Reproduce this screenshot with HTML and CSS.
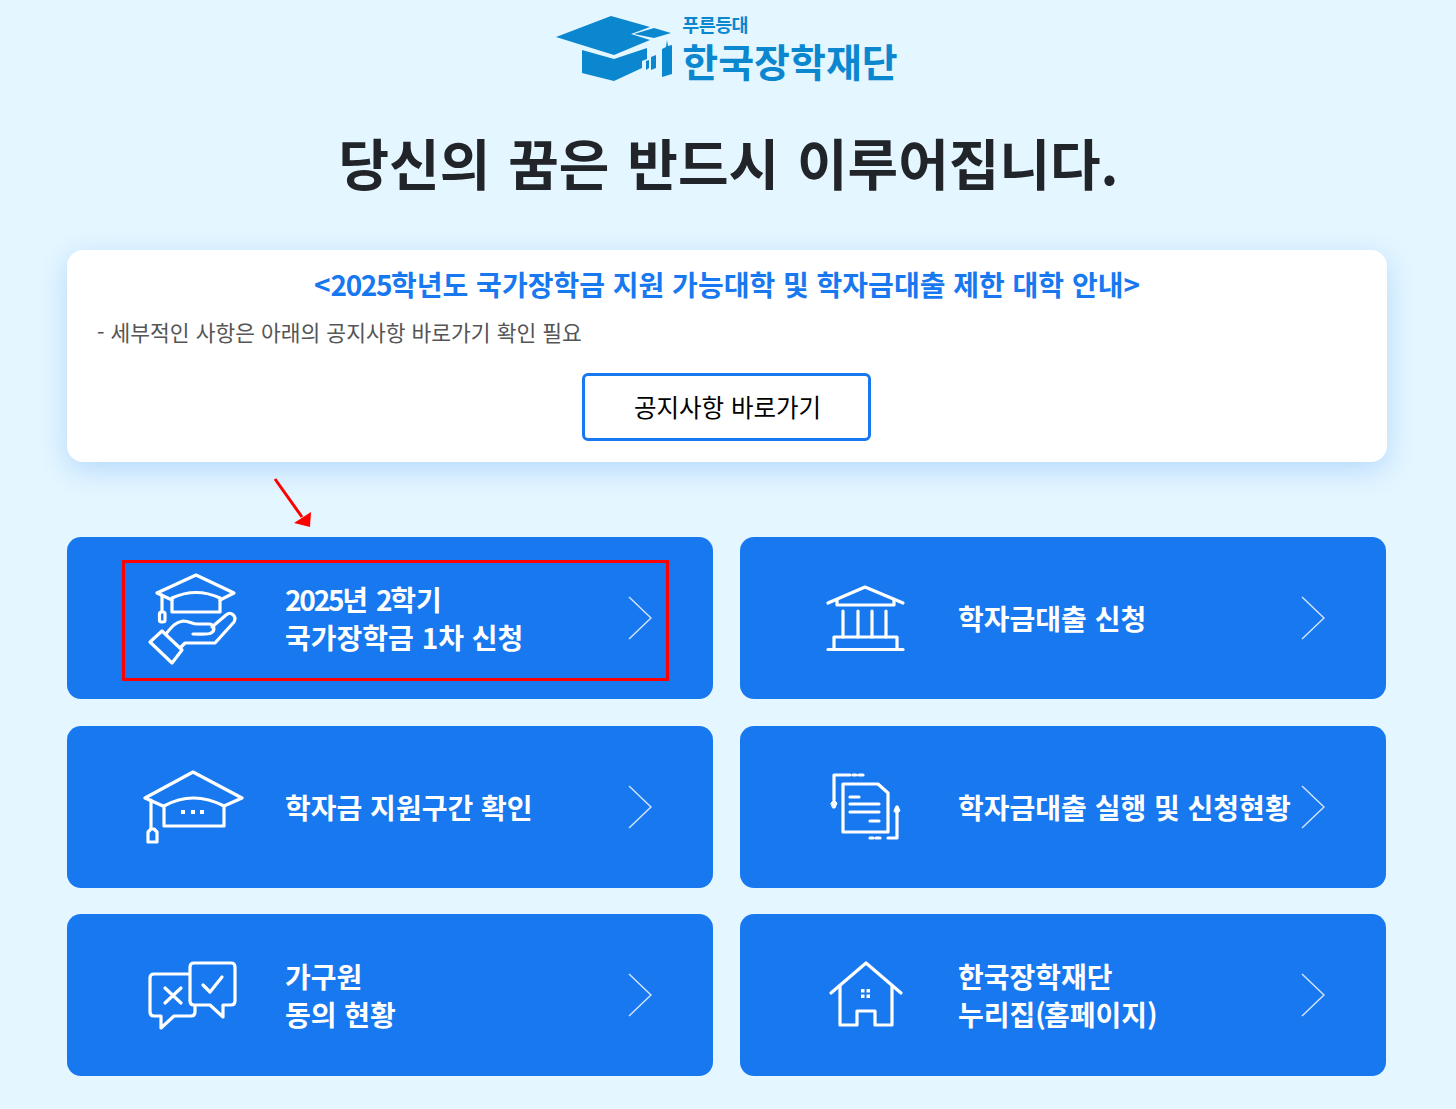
FILE: index.html
```html
<!DOCTYPE html>
<html lang="ko">
<head>
<meta charset="utf-8">
<title>한국장학재단</title>
<link rel="stylesheet" href="styles.css">
</head>
<body>
<div class="page">
  <header class="logo">
    <svg class="logo-mark" viewBox="555 12 122 72" width="122" height="72" aria-hidden="true">
      <path d="M557 37 612 16 651 27 632 34 651 40 615 55Z"/>
      <path d="M635 34 655 28 672 33 655 38Z"/>
      <path d="M583 50 615 59 648 48V59L643 61V68L615 81 583 73Z"/>
      <path d="M647 61 650 60V68L647 70Z"/>
      <path d="M652 57 657 55V68L652 70Z"/>
      <path d="M663 49 667 47 668 40 669 46 673 45V74L663 77Z"/>
    </svg>
    <div class="logo-text">
      <span class="logo-sub">푸른등대</span>
      <span class="logo-name">한국장학재단</span>
    </div>
  </header>

  <h1 class="title">당신의 꿈은 반드시 이루어집니다.</h1>

  <section class="notice">
    <h2 class="notice-title">&lt;<span class="num">2025</span>학년도 국가장학금 지원 가능대학 및 학자금대출 제한 대학 안내&gt;</h2>
    <p class="notice-text">- 세부적인 사항은 아래의 공지사항 바로가기 확인 필요</p>
    <a class="notice-btn" href="#">공지사항 바로가기</a>
  </section>

  <main class="menu">
    <svg class="pointer" viewBox="0 0 40 52" width="40" height="52" aria-hidden="true">
      <path class="pointer-line" d="M2 1 29 39"/>
      <path class="pointer-head" d="M37 49 38 34 21 45Z"/>
    </svg>

    <a class="card" href="#">
      <span class="highlight"></span>
      <svg class="icon" viewBox="142 568 102 100" aria-hidden="true">
        <path d="M157 593 196 575 234 593 220 600M157 593 172 600"/>
        <path d="M172 612V598Q196 587 220 598V612Z"/>
        <path d="M162 595V611"/>
        <rect x="159.5" y="612" width="5.5" height="10" rx="2"/>
        <path d="M150 642 162 631 182 650 172 663Z"/>
        <path d="M166 634C172 626 176 622 183 621 190 621 192 624 197 624H209C214 624 216 630 211 633 208 635 200 634 193 634"/>
        <path d="M212 627 226 615C231 611 237 616 234 622L215 643H185L181 647"/>
      </svg>
      <span class="card-text"><span class="num-tight">2025</span>년 <span class="num-tight">2</span>학기<br>국가장학금 1차 신청</span>
      <svg class="chevron" viewBox="0 0 24 44" aria-hidden="true"><path d="M1 1 23 22 1 43"/></svg>
    </a>

    <a class="card" href="#">
      <svg class="icon" viewBox="815 568 102 100" aria-hidden="true">
        <path d="M828 603 865 587 903 603"/>
        <path d="M837 600V605H894V600"/>
        <path d="M843 611V637M858 611V637M872 611V637M886 611V637"/>
        <path d="M834 649V637H897V649"/>
        <path d="M828 649.5H903"/>
      </svg>
      <span class="card-text">학자금대출 신청</span>
      <svg class="chevron" viewBox="0 0 24 44" aria-hidden="true"><path d="M1 1 23 22 1 43"/></svg>
    </a>

    <a class="card" href="#">
      <svg class="icon" viewBox="142 757 102 100" aria-hidden="true">
        <path d="M145 798 193 772 242 798 224 806M145 798 163 806"/>
        <path d="M164 826V806Q193 790 224 806V826Z"/>
        <path d="M151 800V828"/>
        <path d="M148 832 151 829H154L157 832V842H148Z"/>
        <path class="dots" d="M181 812H185M191 812H195M200 812H204"/>
      </svg>
      <span class="card-text">학자금 지원구간 확인</span>
      <svg class="chevron" viewBox="0 0 24 44" aria-hidden="true"><path d="M1 1 23 22 1 43"/></svg>
    </a>

    <a class="card" href="#">
      <svg class="icon" viewBox="815 757 102 100" aria-hidden="true">
        <path d="M843 784H878L888 793V832H843Z"/>
        <path d="M850 797H859M850 804H879M850 812H879M870 821H879"/>
        <path d="M850 775H834V800"/>
        <path class="solid" d="M831 803 834 800 837 803 835 808H833Z"/>
        <path d="M853 775H856M859 775H863M870 838H873M876 838H880"/>
        <path d="M897 811V838H888"/>
        <path class="solid" d="M894 811 896 806H898L900 811 897 813Z"/>
      </svg>
      <span class="card-text">학자금대출 실행 및 신청현황</span>
      <svg class="chevron" viewBox="0 0 24 44" aria-hidden="true"><path d="M1 1 23 22 1 43"/></svg>
    </a>

    <a class="card" href="#">
      <svg class="icon" viewBox="142 945 102 100" aria-hidden="true">
        <path d="M189 974H154Q150 974 150 978V1012Q150 1016 154 1016H161V1028L174 1016H191Q195 1016 195 1012V1006"/>
        <path d="M194 963H231Q235 963 235 967V1001Q235 1005 231 1005H223V1017L210 1005H194Q190 1005 190 1001V967Q190 963 194 963Z"/>
        <path d="M165 988 181 1003M181 988 165 1003"/>
        <path d="M203 985 210 992 222 977"/>
      </svg>
      <span class="card-text">가구원<br>동의 현황</span>
      <svg class="chevron" viewBox="0 0 24 44" aria-hidden="true"><path d="M1 1 23 22 1 43"/></svg>
    </a>

    <a class="card" href="#">
      <svg class="icon" viewBox="815 945 102 100" aria-hidden="true">
        <path d="M831 993 866 963 901 993"/>
        <path d="M840 986V1025H857V1011H875V1025H892V986"/>
        <path class="thin" d="M861 989H864.5V992.500H861ZM866.500 989H870V992.500H866.500ZM861 994.500H864.500V998H861ZM866.500 994.500H870V998H866.500Z"/>
      </svg>
      <span class="card-text">한국장학재단<br>누리집<span class="paren">(</span>홈페이지<span class="paren">)</span></span>
      <svg class="chevron" viewBox="0 0 24 44" aria-hidden="true"><path d="M1 1 23 22 1 43"/></svg>
    </a>
  </main>
</div>
</body>
</html>
```

FILE: styles.css
```css
* { box-sizing: border-box; }

html, body { margin: 0; padding: 0; }

body {
  background: #e4f6ff;
  color: #212529;
  font-family: "Noto Sans CJK KR", "Noto Sans", sans-serif;
}

a { color: inherit; text-decoration: none; }

.page {
  width: 1456px;
  height: 1109px;
  padding: 0 69px 0 67px;
}

.logo {
  display: flex;
  justify-content: center;
  align-items: flex-start;
  height: 84px;
  padding-top: 12px;
  padding-right: 2px;
  gap: 6px;
}

.logo-mark { display: block; fill: #0a87cf; }

.logo-text {
  display: flex;
  flex-direction: column;
  color: #0a87cf;
  font-weight: 700;
  line-height: 1;
}

.logo-sub { font-size: 18.500px; height: 30px; padding-top: 3px; letter-spacing: -0.6px; }
.logo-name { font-size: 39px; margin-top: -1px; }

.title {
  margin: 38px 0 0;
  padding-left: 3px;
  height: 128px;
  text-align: center;
  font-size: 55px;
  line-height: 78px;
  font-weight: 700;
  word-spacing: 2.500px;
}

.notice {
  display: flex;
  flex-direction: column;
  align-items: center;
  width: 1320px;
  height: 212px;
  padding: 13px 30px 0;
  background: #fff;
  border-radius: 16px;
  box-shadow: 0 8px 28px rgba(24, 120, 240, 0.22);
}

.notice-title {
  margin: 0;
  color: #1878f0;
  font-size: 28px;
  line-height: 42px;
  font-weight: 700;
}

.notice-text {
  align-self: flex-start;
  margin: 12px 0 0;
  color: #555;
  font-size: 21.500px;
  line-height: 30px;
  font-weight: 400;
}

.notice-btn {
  display: flex;
  align-items: center;
  justify-content: center;
  width: 289px;
  height: 68px;
  margin-top: 26px;
  margin-right: 2px;
  padding: 0 0 2px 3px;
  border: 3px solid #1878f0;
  border-radius: 6px;
  color: #000;
  font-size: 24.500px;
}

.menu {
  position: relative;
  display: grid;
  grid-template-columns: 646px 646px;
  grid-auto-rows: 162px;
  column-gap: 27px;
  row-gap: 26.5px;
  margin-top: 75px;
}

.card {
  position: relative;
  display: flex;
  align-items: center;
  padding: 0 61px 0 75px;
  background: #1878f0;
  border-radius: 14px;
  color: #fff;
}

.icon {
  flex: none;
  width: 102px;
  height: 100px;
  margin-right: 41px;
  fill: none;
  stroke: #fff;
  stroke-width: 3.200;
  stroke-linecap: round;
  stroke-linejoin: round;
}

.icon .solid { fill: #fff; stroke-width: 1; }
.icon .dots { stroke-width: 4; stroke-linecap: butt; }
.icon .thin { fill: #fff; stroke: none; }

.card-text {
  flex: 1;
  font-size: 28px;
  line-height: 38px;
  font-weight: 700;
  white-space: nowrap;
}

.num { letter-spacing: -1.400px; }
.num-tight { letter-spacing: -2.200px; }
.paren { letter-spacing: -2px; }

.chevron {
  flex: none;
  width: 24px;
  height: 44px;
  fill: none;
  stroke: rgba(255, 255, 255, 0.8);
  stroke-width: 1.5;
}

.highlight {
  position: absolute;
  left: 55px;
  top: 23px;
  width: 547px;
  height: 121px;
  border: 3px solid #f00;
}

.pointer {
  position: absolute;
  left: 206px;
  top: -59px;
}

.pointer-line { stroke: #f00; stroke-width: 3; fill: none; }
.pointer-head { fill: #f00; }
```
